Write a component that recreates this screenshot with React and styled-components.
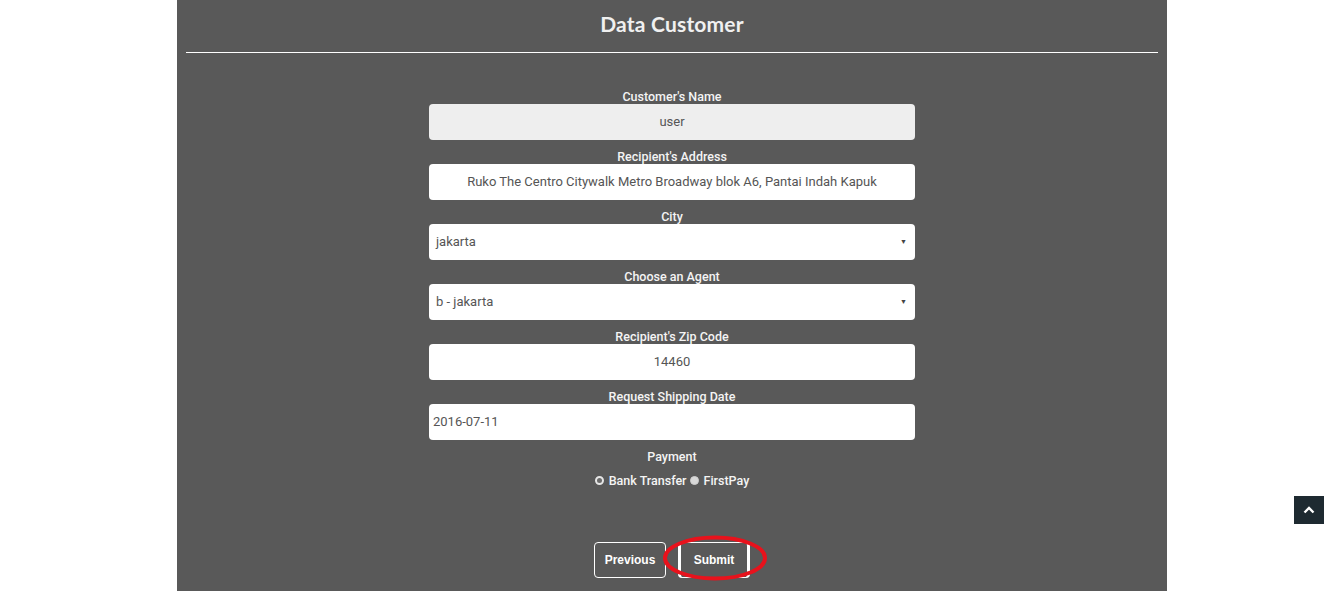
import React from 'react';
import styled, { createGlobalStyle } from 'styled-components';

const GlobalStyle = createGlobalStyle`
  html, body {
    margin: 0;
    padding: 0;
    background: #ffffff;
    font-family: "Liberation Sans", Arial, sans-serif;
  }
`;

const fields = [
  { label: "Customer's Name", value: 'user', kind: 'text', align: 'center', disabled: true },
  { label: "Recipient's Address", value: 'Ruko The Centro Citywalk Metro Broadway blok A6, Pantai Indah Kapuk', kind: 'text', align: 'center' },
  { label: 'City', value: 'jakarta', kind: 'select' },
  { label: 'Choose an Agent', value: 'b - jakarta', kind: 'select' },
  { label: "Recipient's Zip Code", value: '14460', kind: 'text', align: 'center' },
  { label: 'Request Shipping Date', value: '2016-07-11', kind: 'date' },
];

const App = () => {
  return (
    <Page>
      <GlobalStyle />
      <Panel>
        <Title>Data Customer</Title>
        <Divider />
        <Form>
          {fields.map((f) => (
            <Group key={f.label}>
              <Label>{f.label}</Label>
              {f.kind === 'select' ? (
                <SelectBox>
                  <span>{f.value}</span>
                  <Caret>▼</Caret>
                </SelectBox>
              ) : (
                <Field $align={f.align} $disabled={f.disabled} $kind={f.kind}>
                  {f.value}
                </Field>
              )}
            </Group>
          ))}
          <Label>Payment</Label>
          <RadioRow>
            <RadioOption>
              <Radio $checked />
              Bank Transfer
            </RadioOption>
            <RadioOption>
              <Radio />
              FirstPay
            </RadioOption>
          </RadioRow>
        </Form>
        <Actions>
          <OutlineButton>Previous</OutlineButton>
          <SubmitWrap>
            <OutlineButton $thick>Submit</OutlineButton>
            <Highlight width="106" height="46" viewBox="0 0 106 46">
              <ellipse cx="53" cy="23" rx="50" ry="20.5" fill="none" stroke="#e8121c" strokeWidth="4" />
            </Highlight>
          </SubmitWrap>
        </Actions>
      </Panel>
      <ScrollTop>
        <svg width="12" height="8" viewBox="0 0 12 8">
          <path d="M1.5 6.5 L6 2 L10.5 6.5" fill="none" stroke="#ffffff" strokeWidth="2.4" />
        </svg>
      </ScrollTop>
    </Page>
  );
};

export default App;

const Page = styled.div`
  position: relative;
  min-height: 591px;
  overflow: hidden;
`;

const Panel = styled.div`
  margin-left: 177px;
  width: 990px;
  min-height: 591px;
  background: #595959;
  padding: 0 9px;
  box-sizing: border-box;
`;

const Title = styled.h2`
  margin: 0;
  padding-top: 12px;
  height: 40px;
  box-sizing: border-box;
  text-align: center;
  font-family: Lato, "Open Sans", sans-serif;
  font-weight: 700;
  font-size: 21px;
  letter-spacing: 0.2px;
  line-height: 24px;
  color: #f0f0f0;
`;

const Divider = styled.div`
  height: 1px;
  margin-top: 12px;
  background: #ffffff;
`;

const Form = styled.div`
  width: 486px;
  margin: 35px auto 0;
  display: flex;
  flex-direction: column;
`;

const Group = styled.div`
  display: flex;
  flex-direction: column;
  margin-bottom: 8px;
`;

const Label = styled.div`
  text-align: center;
  font-family: Roboto, "Liberation Sans", sans-serif;
  font-weight: 500;
  font-size: 12.5px;
  padding-top: 1px;
  line-height: 15px;
  color: #f4f4f4;
`;

const Field = styled.div`
  height: 36px;
  box-sizing: border-box;
  border-radius: 4px;
  background: ${(p) => (p.$disabled ? '#eeeeee' : '#ffffff')};
  display: flex;
  align-items: center;
  justify-content: ${(p) => (p.$align === 'center' ? 'center' : 'flex-start')};
  padding: 0 ${(p) => (p.$kind === 'date' ? '4px' : '12px')} 2px;
  font-family: Roboto, "Liberation Sans", sans-serif;
  font-size: 13px;
  color: #555555;
  white-space: nowrap;
`;

const SelectBox = styled.div`
  height: 36px;
  box-sizing: border-box;
  border-radius: 4px;
  background: #ffffff;
  display: flex;
  align-items: center;
  justify-content: space-between;
  padding: 0 8px 2px 7px;
  font-family: Roboto, "Liberation Sans", sans-serif;
  font-size: 13px;
  color: #555555;
`;

const Caret = styled.span`
  font-size: 7px;
  color: #444444;
  line-height: 1;
  padding-top: 2px;
`;

const RadioRow = styled.div`
  display: flex;
  justify-content: center;
  gap: 3px;
  margin-top: 8px;
  height: 16px;
  align-items: center;
`;

const RadioOption = styled.label`
  display: flex;
  align-items: center;
  gap: 5px;
  font-family: Roboto, "Liberation Sans", sans-serif;
  font-weight: 500;
  font-size: 12.5px;
  color: #f4f4f4;
`;

const Radio = styled.span`
  width: 9px;
  height: 9px;
  border-radius: 50%;
  box-sizing: border-box;
  background: ${(p) => (p.$checked ? '#6a6a6a' : '#d8d8d8')};
  border: ${(p) => (p.$checked ? '2px solid #e6e6e6' : '1px solid #cfcfcf')};
`;

const Actions = styled.div`
  display: flex;
  justify-content: center;
  gap: 12px;
  margin-top: 54px;
`;

const SubmitWrap = styled.div`
  position: relative;
`;

const OutlineButton = styled.button`
  width: 72px;
  height: 36px;
  box-sizing: border-box;
  background: transparent;
  border: 1px solid #ffffff;
  border-left-width: ${(p) => (p.$thick ? '3px' : '1px')};
  border-right-width: ${(p) => (p.$thick ? '3px' : '1px')};
  border-radius: 4px;
  color: #ffffff;
  font-family: "Liberation Sans", Arial, sans-serif;
  font-weight: 700;
  font-size: 12px;
  cursor: pointer;
`;

const Highlight = styled.svg`
  position: absolute;
  left: -16px;
  top: -7px;
  pointer-events: none;
`;

const ScrollTop = styled.div`
  position: absolute;
  top: 496px;
  right: 13px;
  width: 30px;
  height: 28px;
  background: #1e2a31;
  display: flex;
  align-items: center;
  justify-content: center;
`;
